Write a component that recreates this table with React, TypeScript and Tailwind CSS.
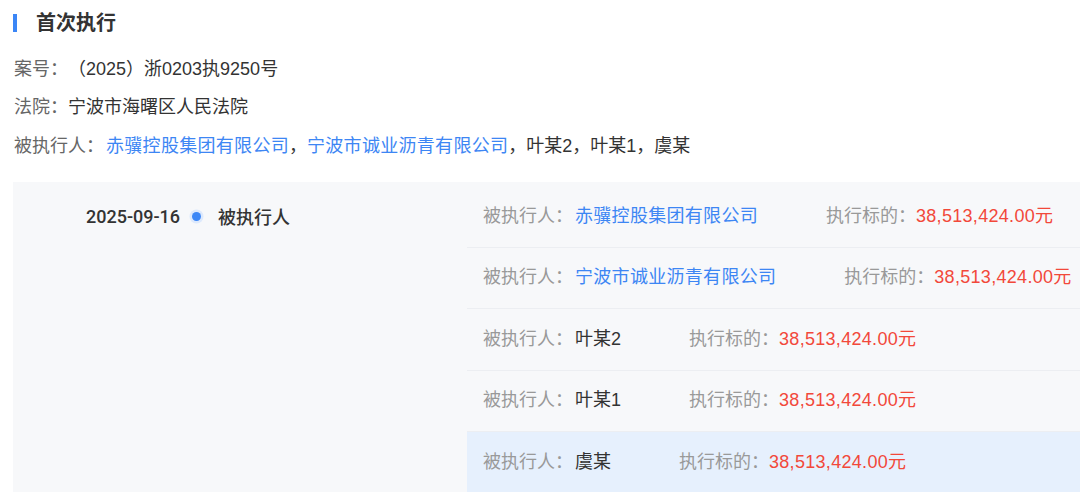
import React from "react";

const rows: { name: string; link: boolean }[] = [
  { name: "赤骥控股集团有限公司", link: true },
  { name: "宁波市诚业沥青有限公司", link: true },
  { name: "叶某2", link: false },
  { name: "叶某1", link: false },
  { name: "虞某", link: false },
];

export default function App() {
  return (
    <div
      className="w-[1080px] h-[492px] overflow-hidden bg-white text-[#333]"
      style={{ fontFamily: '"Liberation Sans", "Noto Sans CJK SC", sans-serif' }}
    >
      {/* Title */}
      <div className="flex items-center h-[45px] pl-[13px]">
        <div className="w-[4px] h-[18px] bg-[#3b86f6]" />
        <div className="ml-[19px] text-[20px] font-bold text-[#333] leading-none">首次执行</div>
      </div>

      {/* Info */}
      <div className="mt-[5px] pl-[14px] text-[18px]">
        <div className="h-[38.5px] flex items-center">
          <span className="text-[#666]">案号：</span>
          <span className="text-[#333]">（2025）浙0203执9250号</span>
        </div>
        <div className="h-[38.5px] flex items-center">
          <span className="text-[#666]">法院：</span>
          <span className="text-[#333]">宁波市海曙区人民法院</span>
        </div>
        <div className="h-[38.5px] flex items-center">
          <span className="text-[#666]">被执行人：</span>
          <span className="ml-[2px] text-[#3d86f4] tracking-[0.3px]">赤骥控股集团有限公司</span>
          <span className="text-[#333]">，</span>
          <span className="text-[#3d86f4] tracking-[0.3px]">宁波市诚业沥青有限公司</span>
          <span className="text-[#333]">，叶某2，叶某1，虞某</span>
        </div>
      </div>

      {/* Panel */}
      <div className="mt-[16.5px] ml-[13px] bg-[#f7f8fa] flex pt-[4px] h-[400px]">
        <div className="w-[454px] shrink-0">
          <div className="h-[60.5px] flex items-center pl-[73px] text-[18px]">
            <span
              className="font-medium text-[#333]"
              style={{ fontFamily: 'Roboto, "Noto Sans CJK SC", sans-serif' }}
            >
              2025-09-16
            </span>
            <span className="ml-[12px] w-[9px] h-[9px] rounded-full bg-[#3b86f6] ring-[2.5px] ring-[#dde9fc]" />
            <span className="ml-[17px] font-medium text-[#333]" style={{ fontFamily: '"Noto Sans CJK SC", sans-serif' }}>
              被执行人
            </span>
          </div>
        </div>
        <div className="flex-1">
          {rows.map((r, i) => (
            <div
              key={i}
              className={
                i === rows.length - 1
                  ? "h-[60.5px] flex items-center pl-[16px] text-[18px] bg-[#e6f0fd]"
                  : "h-[61.5px] flex items-center pl-[16px] text-[18px] border-b border-[#eceef2]"
              }
            >
              <span className="text-[#999]">被执行人：</span>
              <span className={r.link ? "ml-[2px] text-[#3d86f4] tracking-[0.3px]" : "ml-[2px] text-[#333]"}>{r.name}</span>
              <span className="ml-[68px] text-[#999]">执行标的：</span>
              <span className="text-[#f2483a] tracking-[0.3px]">38,513,424.00元</span>
            </div>
          ))}
        </div>
      </div>
    </div>
  );
}
